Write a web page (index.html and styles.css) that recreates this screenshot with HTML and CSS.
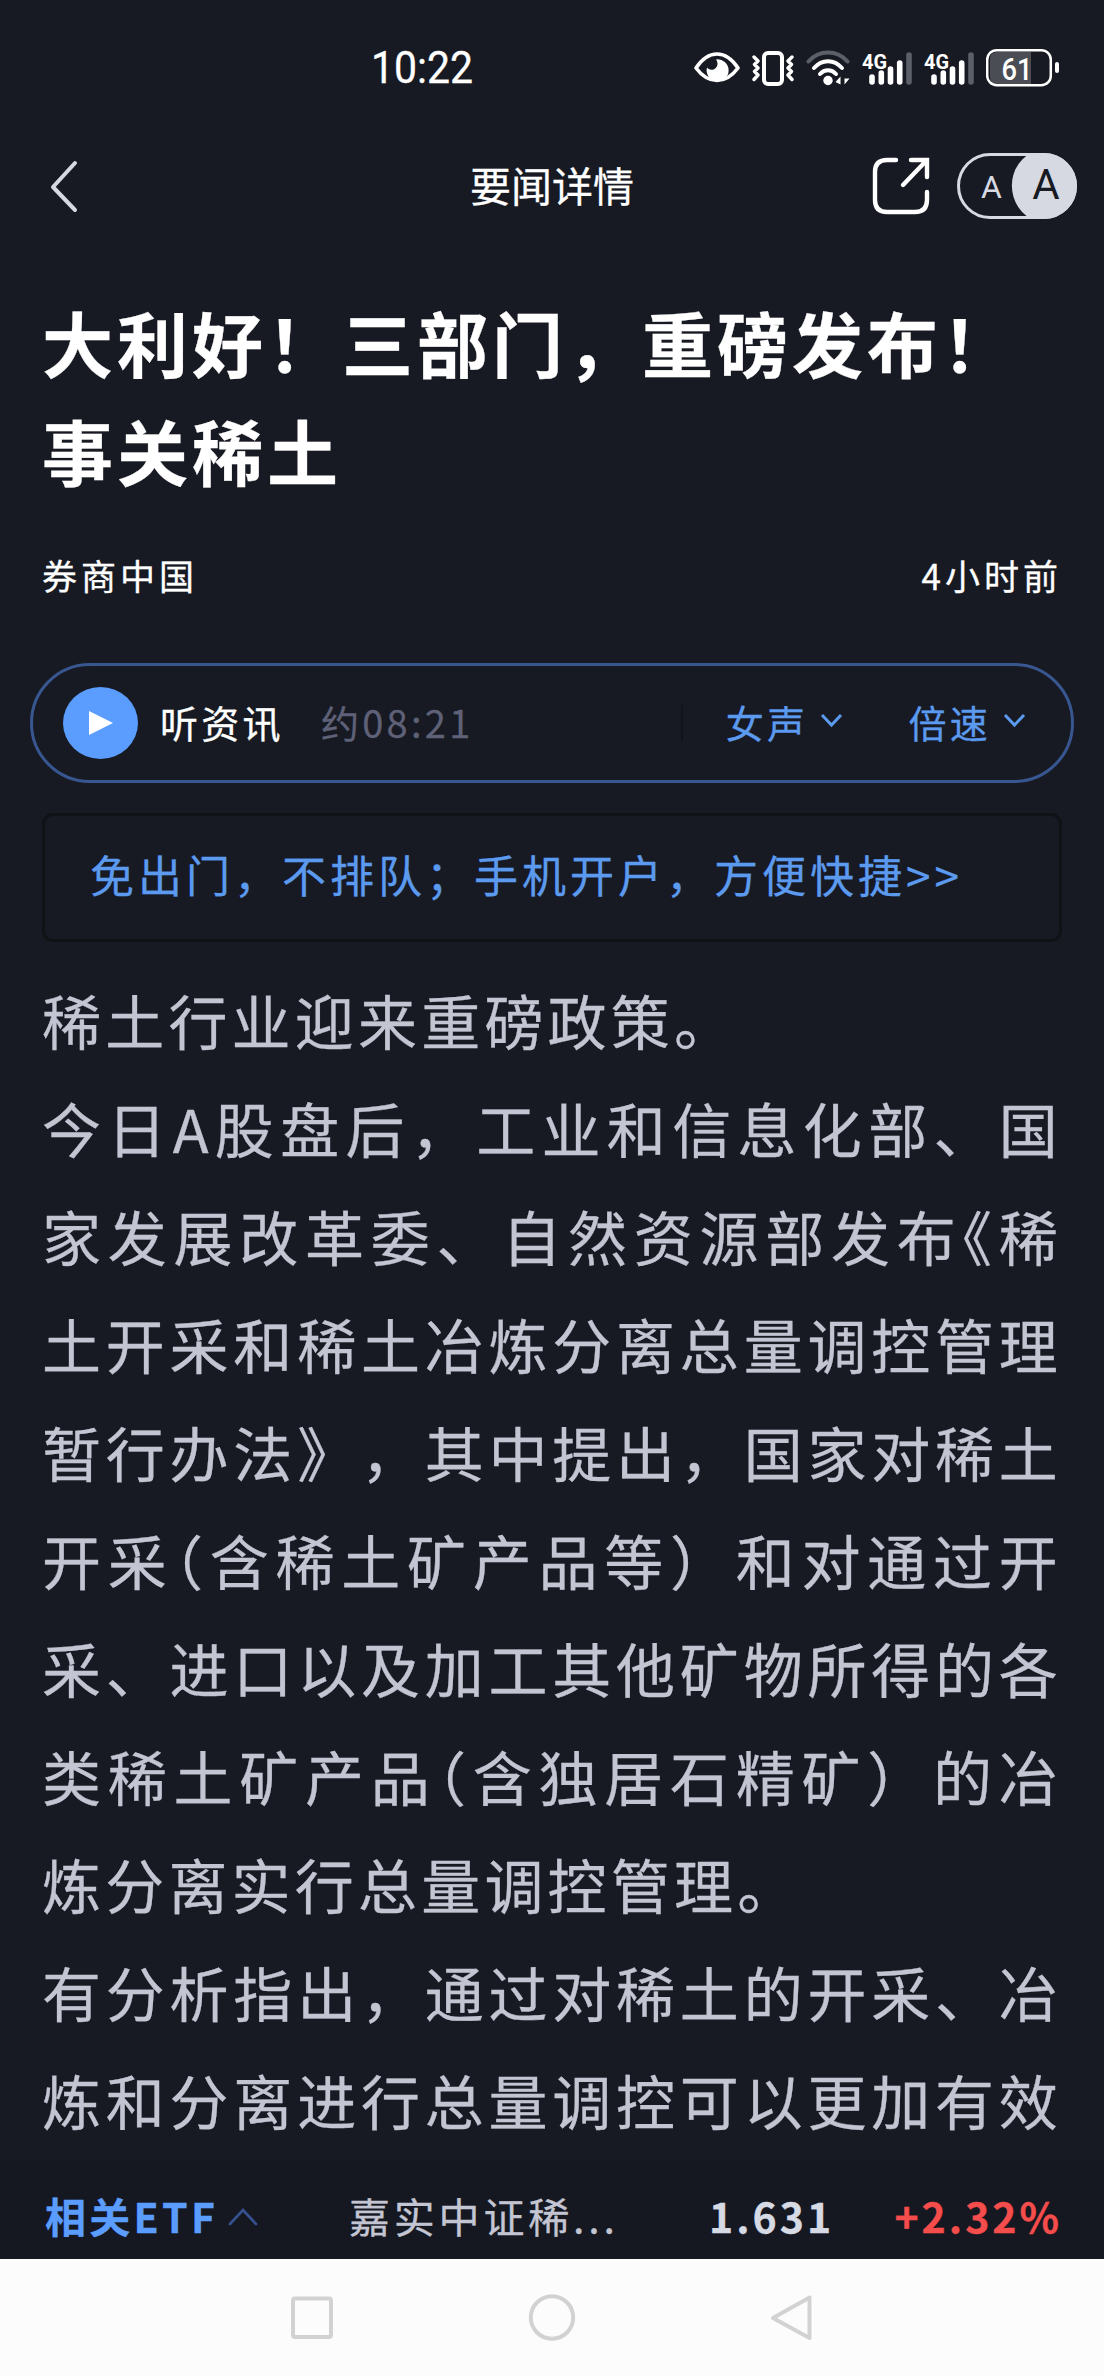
FILE: index.html
```html
<!DOCTYPE html>
<html lang="zh-CN">
<head>
<meta charset="utf-8">
<title>要闻详情</title>
<link rel="stylesheet" href="styles.css">
</head>
<body>
<div class="status">
  <span class="clock">10:22</span>
  <div class="status-icons">
    <svg class="eye" width="46" height="40" viewBox="0 0 46 40" fill="none">
      <path d="M2 20C8 11 15 6 23 6s15 5 21 14c-6 8-13 12.500-21 12.500S8 28 2 20Z" stroke="#fff" stroke-width="3.600" stroke-linejoin="round"/>
      <path d="M22 11.500a11 11 0 1 1-9 8c1 1.500 4 3.500 7.500 1.500 4-2.500 3.500-7 1.500-9.500Z" fill="#fff"/>
    </svg>
    <svg class="vibrate" width="42" height="40" viewBox="0 0 42 40" fill="none" stroke="#fff">
      <rect x="12" y="5" width="18" height="31" rx="4" stroke-width="4"/>
      <path d="M2 9l4 4-3.500 3.500L6 20l-3.500 3.500L6 27l-4 4.500M40 9l-4 4 3.500 3.500L36 20l3.500 3.500L36 27l4 4.500" stroke-width="3.400" stroke-linecap="round" stroke-linejoin="round"/>
    </svg>
    <svg class="wifi" width="44" height="40" viewBox="0 0 44 40" fill="none" stroke="#fff" stroke-width="4" stroke-linecap="round">
      <path d="M2.500 13.500C13 1.500 31 1.500 41.500 13.500" stroke="#5b5f68"/>
      <path d="M8 20c8-9 20-9 28 0M14 26c4.500-5 11.500-5 16 0"/>
      <circle cx="22" cy="32.500" r="4.700" fill="#fff" stroke="none"/>
      <path d="M29.500 34l5-5.500v8ZM38.500 27.500v9l5-6h-5Z" fill="#fff" stroke="none"/>
    </svg>
    <svg class="signal" width="50" height="40" viewBox="0 0 50 40" stroke="#fff" stroke-width="5.600" stroke-linecap="round">
      <path d="M10 29v5M19.300 25v9M28.500 21v13M37.700 15v19"/>
      <path d="M47 7v27" stroke="#5b5f68"/>
      <text class="net" x="0" y="20.500" textLength="25" lengthAdjust="spacingAndGlyphs">4G</text>
    </svg>
    <svg class="signal" width="50" height="40" viewBox="0 0 50 40" stroke="#fff" stroke-width="5.600" stroke-linecap="round">
      <path d="M10 29v5M19.300 25v9M28.500 21v13M37.700 15v19"/>
      <path d="M47 7v27" stroke="#5b5f68"/>
      <text class="net" x="0" y="20.500" textLength="25" lengthAdjust="spacingAndGlyphs">4G</text>
    </svg>
    <svg class="battery" width="74" height="40" viewBox="0 0 74 40">
      <path d="M11 4H45V36H11Q4 36 4 29V11Q4 4 11 4Z" fill="#4b4d54"/>
      <rect x="1.200" y="2.200" width="63.600" height="35" rx="9.500" fill="none" stroke="#fff" stroke-width="2.500"/>
      <rect x="69" y="14" width="4" height="11" rx="2" fill="#fff"/>
      <text class="level" x="15.500" y="31.500" textLength="31" lengthAdjust="spacingAndGlyphs">61</text>
    </svg>
  </div>
</div>

<header class="topbar">
  <svg class="back" width="32" height="54" viewBox="0 0 32 54" fill="none" stroke="#d6d9e2" stroke-width="4" stroke-linecap="round" stroke-linejoin="round"><path d="M27 4 5 28 27 51"/></svg>
  <h2 class="page-title">要闻详情</h2>
  <div class="tools">
    <svg width="58" height="58" viewBox="0 0 58 58" fill="none" stroke="#fff" stroke-width="4.400" stroke-linecap="round">
      <path d="M24 3H15Q3 3 3 15V43Q3 55 15 55H43Q55 55 55 43V35"/>
      <path d="M39 3H55V20M54 4 31 28"/>
    </svg>
    <svg width="120" height="66" viewBox="0 0 120 66">
      <rect x="1.500" y="1.500" width="117" height="63" rx="31.500" fill="none" stroke="#d6d9e2" stroke-width="3"/>
      <path d="M74 0H87A33 33 0 0 1 87 66H74C49 52 48 14 74 0Z" fill="#d6d9e2"/>
      <text class="size-small" x="34.500" y="44.500">A</text>
      <text class="size-large" x="89" y="46">A</text>
    </svg>
  </div>
</header>

<main class="article">
  <h1 class="headline">大利好！三部门，重磅发布！<br>事关稀土</h1>
  <div class="meta"><span>券商中国</span><span>4小时前</span></div>

  <div class="player">
    <svg class="play" width="75" height="72" viewBox="0 0 75 72"><ellipse cx="37.500" cy="36" rx="37.500" ry="36" fill="#5b9dff"/><path d="M26 24 50 36 26 48Z" fill="#fff"/></svg>
    <span class="listen">听资讯</span>
    <span class="duration">约08:21</span>
    <span class="divider"></span>
    <span class="option"><span>女声</span><svg width="23" height="15" viewBox="0 0 23 15"><path d="M2 2 11.500 12 21 2"/></svg></span>
    <span class="option"><span>倍速</span><svg width="23" height="15" viewBox="0 0 23 15"><path d="M2 2 11.500 12 21 2"/></svg></span>
  </div>

  <a class="promo">免出门，不排队；手机开户，方便快捷&gt;&gt;</a>

  <div class="content">
    <p><span class="line last">稀土行业迎来重磅政策。</span></p>
    <p>
      <span class="line">今日A股盘后，工业和信息化部、国</span>
      <span class="line">家发展改革委、自然资源部发布<span class="half">《</span>稀</span>
      <span class="line">土开采和稀土冶炼分离总量调控管理</span>
      <span class="line">暂行办法》，其中提出，国家对稀土</span>
      <span class="line">开采<span class="half">（</span>含稀土矿产品等）和对通过开</span>
      <span class="line">采、进口以及加工其他矿物所得的各</span>
      <span class="line">类稀土矿产品<span class="half">（</span>含独居石精矿）的冶</span>
      <span class="line last">炼分离实行总量调控管理。</span>
    </p>
    <p>
      <span class="line">有分析指出，通过对稀土的开采、冶</span>
      <span class="line">炼和分离进行总量调控可以更加有效</span>
    </p>
  </div>
</main>

<section class="quote">
  <span class="related">相关ETF</span>
  <svg class="expand" width="30" height="18" viewBox="0 0 30 18" fill="none" stroke="#35528e" stroke-width="2.600" stroke-linecap="round"><path d="M2 16 15 2 28 16"/></svg>
  <span class="fund">嘉实中证稀<span class="dots">...</span></span>
  <span class="price">1.631</span>
  <span class="change">+2.32%</span>
</section>

<nav class="sysnav">
  <svg width="48" height="50" viewBox="0 0 48 50"><rect x="5" y="4.500" width="38" height="38.500" rx="2"/></svg>
  <svg width="48" height="50" viewBox="0 0 48 50"><circle cx="24" cy="23.500" r="21.200"/></svg>
  <svg width="48" height="50" viewBox="0 0 48 50"><path d="M41.500 3.500V44L5 24Z"/></svg>
</nav>
</body>
</html>
```
FILE: styles.css
```css
* { box-sizing: border-box; margin: 0; padding: 0; }

body {
  width: 1104px;
  height: 2376px;
  display: flex;
  flex-direction: column;
  overflow: hidden;
  background: #171a22;
  color: #fff;
  font-family: "Noto Sans CJK SC", sans-serif;
  text-spacing-trim: space-all;
  white-space: nowrap;
  -webkit-text-stroke: .3px currentColor;
}

svg { display: block; flex: none; }
svg text { -webkit-text-stroke: 0; }

.status {
  height: 134px;
  padding: 2px 44px 0 371px;
  display: flex;
  align-items: center;
  justify-content: space-between;
}
.clock {
  font: 400 45px/60px Roboto, sans-serif;
  transform: scaleX(.91);
  transform-origin: 0 50%;
}
.status-icons { display: flex; align-items: center; gap: 12px; }
.net { font: 700 21px Roboto, sans-serif; fill: #fff; stroke: none; }
.level { font: 500 32px Roboto, sans-serif; fill: #fff; }

.topbar {
  height: 104px;
  padding: 0 27px 0 48px;
  display: grid;
  grid-template-columns: 402px 1fr auto;
  align-items: center;
}
.back { justify-self: start; }
.page-title { margin: -4px 0 0 20px; font-size: 41px; line-height: 60px; font-weight: 400; }
.tools { display: flex; align-items: center; justify-content: flex-end; gap: 27px; }
.size-small { font: 400 32px Roboto, sans-serif; fill: #d6d9e2; text-anchor: middle; }
.size-large { font: 400 42px Roboto, sans-serif; fill: #171a22; text-anchor: middle; }

.article { height: 1922px; padding: 49px 42px 0; overflow: hidden; }
.headline { font-size: 71px; line-height: 108px; letter-spacing: 4px; font-weight: 700; }
.meta {
  margin-top: 42px;
  height: 60px;
  display: flex;
  justify-content: space-between;
  font-size: 35px;
  line-height: 60px;
  letter-spacing: 4px;
}

.player {
  width: 1044px;
  height: 120px;
  margin: 58px -12px 0;
  padding: 0 45px 0 30px;
  display: flex;
  align-items: center;
  border: 3px solid #38568f;
  border-radius: 60px;
  font-size: 38px;
  line-height: 56px;
  letter-spacing: 3.3px;
}
.player span:not(.divider) { padding-bottom: 1.5px; }
.listen { margin-left: 22px; }
.duration { margin-left: 37px; color: #5f6178; }
.divider { width: 2px; height: 36px; margin-left: auto; background: #101319; }
.option { display: flex; align-items: center; margin-left: 43px; color: #5b9aef; }
.option + .option { margin-left: 65px; }
.option svg { margin-left: 12px; fill: none; stroke: #5b9aef; stroke-width: 3; position: relative; top: -2px; }

.promo {
  display: block;
  height: 129px;
  margin-top: 30px;
  padding-left: 45px;
  border: 3px solid #101216;
  border-radius: 11px;
  color: #5b9aef;
  font-size: 44px;
  line-height: 117px;
  letter-spacing: 4px;
}

.content {
  margin-top: 24px;
  color: #c3c5d3;
  font-size: 59px;
  line-height: 108px;
  letter-spacing: 4.200px;
}
.line { display: block; height: 108px; text-align: justify; text-align-last: justify; white-space: normal; }
.line.last { text-align-last: left; }
.half { font-feature-settings: "halt"; }

.quote {
  height: 99px;
  padding: 11px 42px 0 45px;
  display: grid;
  grid-template-columns: 183px 121px 360px 1fr auto;
  align-items: center;
  background: #151820;
  font-size: 41px;
  line-height: 60px;
  letter-spacing: 3.800px;
}
.related { color: #5b9dff; font-weight: 700; letter-spacing: 3.300px; }
.expand { margin-top: 4px; }
.fund { color: #c3c5d3; }
.price { color: #d6dae4; font-weight: 700; letter-spacing: 3px; }
.change { color: #f54c4c; font-weight: 700; letter-spacing: 3px; }

.sysnav {
  flex: 1;
  padding-top: 35px;
  display: flex;
  justify-content: center;
  gap: 192px;
  background: #fcfcfc;
}
.sysnav svg { fill: none; stroke: #d2d2d2; stroke-width: 4; stroke-linejoin: round; }
```
